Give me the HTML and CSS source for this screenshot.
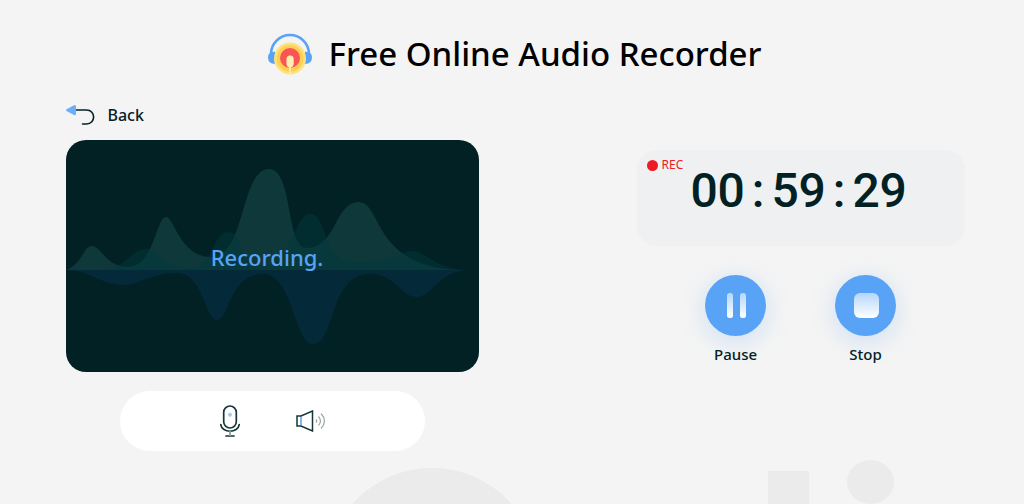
FILE: index.html
```html
<!DOCTYPE html>
<html lang="en">
  <head>
    <meta charset="utf-8">
    <meta name="viewport" content="width=device-width, initial-scale=1">
    <title>Free Online Audio Recorder</title>
    <link rel="stylesheet" href="styles.css">
  </head>
  <body>
    <svg class="backdrop" viewBox="0 0 1024 44" aria-hidden="true">
      <circle cx="432" cy="114" r="106" />
      <rect x="768" y="11" width="41" height="60" />
      <ellipse cx="870.5" cy="22" rx="23.5" ry="22" />
    </svg>

    <header class="header">
      <svg class="logo" viewBox="0 0 44 42" aria-hidden="true">
        <path d="M3 25v-4a19 19 0 0 1 38 0v4" fill="none" stroke="#58a3f6" stroke-width="2.6" />
        <path d="M7 18.500v12.500q-7 0-7-6.500 0-4 3-5z" fill="#58a3f6" />
        <path d="M37 18.500v12.500q7 0 7-6.500 0-4-3-5z" fill="#58a3f6" />
        <circle cx="22" cy="25.500" r="16" fill="#ffe27f" />
        <circle cx="22" cy="25.500" r="13.500" fill="#ffd150" />
        <circle cx="22" cy="25" r="10" fill="#fa5455" />
        <path d="M18.500 26a3.600 3.600 0 0 1 7.200 0v4.500q0 3-2.800 4v7h-1.600v-7q-2.800-1-2.800-4z" fill="#ffeeb4" />
      </svg>
      <h1 class="title">Free Online Audio Recorder</h1>
    </header>

    <main class="recorder">
      <section class="preview">
        <button type="button" class="back">
          <svg class="back-icon" viewBox="0 0 29 20" aria-hidden="true">
            <path d="M7 5h13.500c9.500 0 9.500 14 0 14h-4" fill="none" stroke="#032326" stroke-width="1.600" stroke-linecap="round" />
            <path d="M0.500 4.200 8 .2q2-.5 2 1.500v7q0 2-2 1.200L.5 6q-1-.9 0-1.800z" fill="#6baff8" />
          </svg>
          Back
        </button>

        <div class="screen">
          <svg class="wave" viewBox="0 0 412 232" preserveAspectRatio="none" aria-hidden="true">
            <path d="M0 130C24 130 35 145 57 145 73 145 85 133 111 133 137 133 139 180 151 180 163 180 163 134 197 134 227 134 228 204 247 204 270 204 262 134 304 134 330 134 334 157 351 157 366 157 372 130 404 130z" fill="#042a39" />
            <path d="M0 130C16 125 17 106 26 106 35 106 40 127 62 127 88 127 90 77 100 77 108 77 114 117 145 117 180 117 174 29 203 29 227 29 220 108 240 108 271 108 268 62 293 62 316 62 306 130 398 130z" fill="#0f383b" />
            <path d="M38 130C58 130 65 109 80 109 93 109 97 128 125 128 148 128 146 92 162 92 178 92 172 126 196 126 225 126 228 74 244 74 262 74 255 122 287 122 333 122 334 111 346 111 360 111 368 130 404 130z" fill="#00393d" fill-opacity="0.5" />
          </svg>
          <span class="status">Recording.</span>
        </div>

        <div class="sources">
          <button type="button" class="source" aria-label="Microphone">
            <svg class="mic-icon" viewBox="0 0 20 32" fill="none" stroke="#173539" stroke-width="1.700" stroke-linecap="round" aria-hidden="true">
              <rect x="3.700" y="1" width="12.600" height="22" rx="6.300" />
              <path d="M.8 19.500c1 9 17.400 9 18.400 0M6 31h8" />
              <path d="M10 26.500v4" stroke="#899a9b" />
              <circle cx="10" cy="9.800" r="2" fill="#9fcbfb" stroke="none" />
            </svg>
          </button>
          <button type="button" class="source" aria-label="System sound">
            <svg class="speaker-icon" viewBox="0 0 30 22" fill="none" stroke="#173539" stroke-width="1.500" aria-hidden="true">
              <path d="M5 6.500v9" stroke="#58a3f6" />
              <path d="M1 6h4L16.500 1v20L5 16H1z" />
              <path d="M20 9.500q1.500 1.500 0 3M22.500 6.500q4 4.500 0 9M25 3.500q7 7.500 0 15" stroke="#9aa9a3" stroke-width="1.200" />
            </svg>
          </button>
        </div>
      </section>

      <section class="panel">
        <div class="timer">
          <span class="rec"><span class="rec-dot"></span>REC</span>
          <time class="clock">
            <span>0</span><span>0</span><span>:</span><span>5</span><span>9</span><span>:</span><span>2</span><span>9</span>
          </time>
        </div>

        <div class="controls">
          <button type="button" class="control">
            <span class="disc">
              <svg class="control-icon" viewBox="0 0 26 26" aria-hidden="true">
                <defs>
                  <linearGradient id="fade" x1="0" y1="0" x2="0" y2="1">
                    <stop offset="0" stop-color="#b5d6fc" />
                    <stop offset="1" stop-color="#ffffff" />
                  </linearGradient>
                </defs>
                <rect x="4" y="0" width="6" height="25" rx="2.500" fill="url(#fade)" />
                <rect x="17" y="0" width="6" height="25" rx="2.500" fill="url(#fade)" />
              </svg>
            </span>
            Pause
          </button>
          <button type="button" class="control">
            <span class="disc">
              <svg class="control-icon" viewBox="0 0 26 26" aria-hidden="true">
                <rect x="1" y="0" width="25" height="25" rx="6" fill="url(#fade)" />
              </svg>
            </span>
            Stop
          </button>
        </div>
      </section>
    </main>
  </body>
</html>
```

FILE: styles.css
```css
* {
  box-sizing: border-box;
}
body {
  position: relative;
  min-height: 100vh;
  margin: 0;
  background: #f4f4f4;
  color: #022124;
  font-family: "Noto Sans", "Open Sans", sans-serif;
}
button {
  padding: 0;
  border: none;
  background: none;
  color: inherit;
  font: inherit;
  cursor: pointer;
}
.backdrop {
  position: absolute;
  z-index: -1;
  bottom: 0;
  left: 0;
  display: block;
  width: 100%;
  fill: #ebebeb;
}
.header {
  display: flex;
  justify-content: center;
  align-items: center;
  gap: 16px;
  padding: 30px 0 0 6px;
}
.logo {
  width: 44px;
  height: 42px;
}
.title {
  margin: 0;
  color: #000;
  font-size: 33px;
  font-weight: 500;
  line-height: 48px;
}

/* two columns: preview and controls */
.recorder {
  display: flex;
  justify-content: space-between;
  align-items: flex-start;
  width: 88%;
  margin: 0 auto;
  padding: 24px 0 48px 5px;
}
.preview {
  width: 46%;
}
.back {
  display: flex;
  align-items: center;
  gap: 12px;
  font-size: 16px;
  font-weight: 500;
  line-height: 26px;
}
.back-icon {
  width: 29px;
  height: 20px;
}
.screen {
  position: relative;
  height: 232px;
  margin-top: 12px;
  border-radius: 20px;
  background: #022124;
  overflow: hidden;
}
.wave {
  display: block;
  width: 100%;
  height: 100%;
}
.status {
  position: absolute;
  top: 101px;
  left: 35%;
  color: #58a3f6;
  font-size: 22px;
  font-weight: 500;
  line-height: 32px;
}
.sources {
  display: flex;
  justify-content: center;
  align-items: center;
  gap: 56px;
  width: 74%;
  height: 60px;
  margin: 19px auto 0;
  border-radius: 30px;
  background: #fff;
}
.source {
  display: flex;
}
.mic-icon {
  width: 20px;
  height: 32px;
}
.speaker-icon {
  width: 30px;
  height: 22px;
}

/* timer */
.panel {
  width: 328px;
  margin-right: -2px;
  padding-top: 48px;
}
.timer {
  position: relative;
  display: flex;
  justify-content: center;
  height: 96px;
  padding: 13px 4px 0 0;
  border-radius: 20px;
  background: #eef0f2;
}
.rec {
  position: absolute;
  top: 7px;
  left: 10px;
  display: flex;
  align-items: center;
  gap: 4px;
  color: #eb1c24;
  font-size: 12px;
  line-height: 16px;
}
.rec-dot {
  width: 11px;
  height: 11px;
  border-radius: 50%;
  background: #eb1c24;
}
.clock {
  display: flex;
  font-family: Roboto, sans-serif;
  font-size: 48px;
  font-weight: 500;
  line-height: 56px;
}
.clock span {
  width: 27px;
  text-align: center;
}

/* pause and stop */
.controls {
  display: flex;
  justify-content: center;
  gap: 69px;
  padding-top: 29px;
}
.control {
  display: flex;
  flex-direction: column;
  align-items: center;
  gap: 8px;
  width: 61px;
  font-size: 15px;
  font-weight: 500;
  line-height: 20px;
}
.disc {
  display: flex;
  justify-content: center;
  align-items: center;
  width: 61px;
  height: 61px;
  border-radius: 50%;
  background: #58a3f6;
  box-shadow: 0 5px 24px #58a3f640;
}
.control-icon {
  width: 26px;
  height: 26px;
}
```
